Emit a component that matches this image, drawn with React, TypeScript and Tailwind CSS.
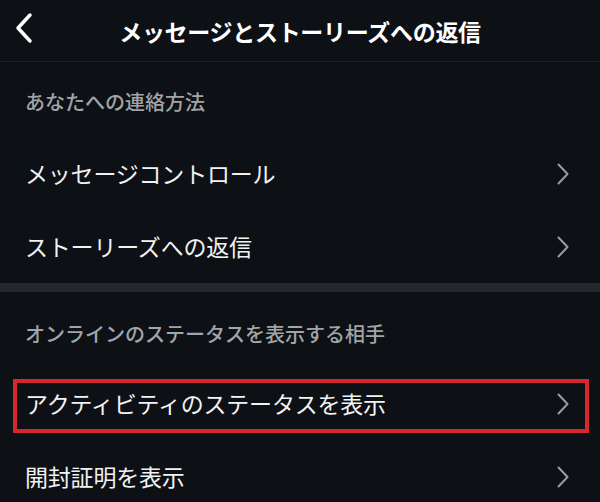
import React from 'react';

const font = { fontFamily: '"Noto Sans CJK JP", "Noto Sans", sans-serif' };

function Chevron() {
  return (
    <svg width="14" height="22" viewBox="0 0 14 22" fill="none" className="shrink-0">
      <path d="M2.5 1.5 L11.5 11 L2.5 20.5" stroke="#9b9ca0" strokeWidth="2" strokeLinecap="round" strokeLinejoin="round" />
    </svg>
  );
}

function SectionTitle({ text, pt }: { text: string; pt: string }) {
  return (
    <div className={`h-[75px] px-[25px] ${pt}`}>
      <p className="text-[20px] leading-[28px] text-[#a2a4a8] font-medium">{text}</p>
    </div>
  );
}

function Row({ label, highlight }: { label: string; highlight?: boolean }) {
  return (
    <div className="relative h-[73px] flex items-center justify-between pl-[25px] pr-[30px]">
      <span className="text-[23px] text-[#f2f2f2] tracking-[-0.2px]">{label}</span>
      <Chevron />
      {highlight && (
        <div className="absolute left-[13px] right-[11px] top-[12px] bottom-[7px] border-[4px] border-[#d8262d] pointer-events-none" />
      )}
    </div>
  );
}

export default function App() {
  return (
    <div className="w-[600px] h-[502px] overflow-hidden bg-[#0d1015]" style={font}>
      {/* Header */}
      <div className="relative h-[61px] flex items-center justify-center">
        <div className="absolute left-[14px] top-[12px]">
          <svg width="20" height="32" viewBox="0 0 20 32" fill="none">
            <path d="M16 3 L4 16 L16 29" stroke="#ffffff" strokeWidth="3.5" strokeLinecap="round" strokeLinejoin="round" />
          </svg>
        </div>
        <h1 className="text-[23px] font-semibold text-white tracking-[-0.3px] pt-[1px]">
          メッセージとストーリーズへの返信
        </h1>
      </div>
      <div className="h-px bg-[#1f2228]" />

      <SectionTitle text="あなたへの連絡方法" pt="pt-[26px]" />
      <Row label="メッセージコントロール" />
      <Row label="ストーリーズへの返信" />

      <div className="h-[9px] bg-[#26272b]" />

      <SectionTitle text="オンラインのステータスを表示する相手" pt="pt-[28px]" />
      <Row label="アクティビティのステータスを表示" highlight />
      <Row label="開封証明を表示" />
    </div>
  );
}
